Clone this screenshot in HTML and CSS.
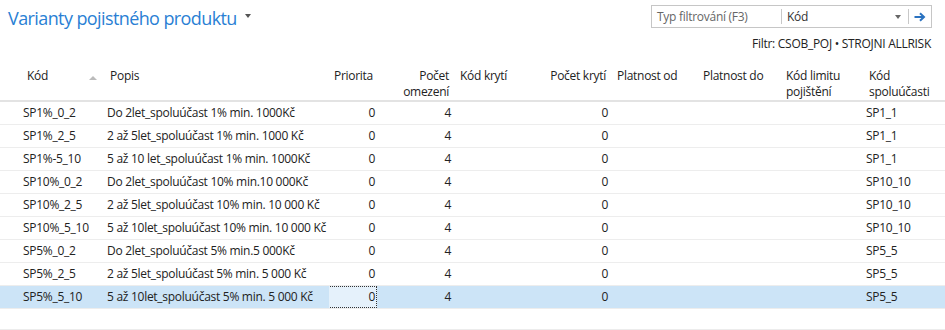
FILE: index.html
```html
<!DOCTYPE html>
<html lang="cs">
<head>
<meta charset="utf-8">
<link rel="stylesheet" href="styles.css">
</head>
<body>
<div class="page">
  <div class="topbar">
    <div class="title">Varianty pojistného produktu <span class="caret"></span></div>
    <div class="search">
      <span class="search-input">Typ filtrování (F3)</span>
      <span class="sep"></span>
      <span class="search-field">Kód</span>
      <span class="dd"></span>
      <span class="sep sep2"></span>
      <svg class="go" width="12" height="10" viewBox="0 0 12 10"><path d="M0.5 5H9.5M6 1.2L10 5L6 8.8" fill="none" stroke="#2a72c0" stroke-width="2"/></svg>
    </div>
  </div>
  <div class="filter">Filtr: CSOB_POJ • STROJNI ALLRISK</div>
  <table class="grid">
    <colgroup>
      <col class="c1"><col class="c2"><col class="c3"><col class="c4"><col class="c5"><col class="c6"><col class="c7"><col class="c8"><col class="c9"><col class="c10">
    </colgroup>
    <thead>
      <tr>
        <th class="h-kod">Kód<span class="sort"></span></th>
        <th class="h-popis">Popis</th>
        <th class="num">Priorita</th>
        <th class="num">Počet<br>omezení</th>
        <th>Kód krytí</th>
        <th class="num">Počet krytí</th>
        <th>Platnost od</th>
        <th>Platnost do</th>
        <th>Kód limitu<br>pojištění</th>
        <th class="h-last">Kód<br>spoluúčasti</th>
      </tr>
    </thead>
    <tbody>
      <tr><td>SP1%_0_2</td><td>Do 2let_spoluúčast 1% min. 1000Kč</td><td class="num">0</td><td class="num">4</td><td></td><td class="num">0</td><td></td><td></td><td></td><td class="last">SP1_1</td></tr>
      <tr><td>SP1%_2_5</td><td>2 až 5let_spoluúčast 1% min. 1000 Kč</td><td class="num">0</td><td class="num">4</td><td></td><td class="num">0</td><td></td><td></td><td></td><td class="last">SP1_1</td></tr>
      <tr><td>SP1%-5_10</td><td>5 až 10 let_spoluúčast 1% min. 1000Kč</td><td class="num">0</td><td class="num">4</td><td></td><td class="num">0</td><td></td><td></td><td></td><td class="last">SP1_1</td></tr>
      <tr><td>SP10%_0_2</td><td>Do 2let_spoluúčast 10% min.10 000Kč</td><td class="num">0</td><td class="num">4</td><td></td><td class="num">0</td><td></td><td></td><td></td><td class="last">SP10_10</td></tr>
      <tr><td>SP10%_2_5</td><td>2 až 5let_spoluúčast 10% min. 10 000 Kč</td><td class="num">0</td><td class="num">4</td><td></td><td class="num">0</td><td></td><td></td><td></td><td class="last">SP10_10</td></tr>
      <tr><td>SP10%_5_10</td><td>5 až 10let_spoluúčast 10% min. 10 000 Kč</td><td class="num">0</td><td class="num">4</td><td></td><td class="num">0</td><td></td><td></td><td></td><td class="last">SP10_10</td></tr>
      <tr><td>SP5%_0_2</td><td>Do 2let_spoluúčast 5% min.5 000Kč</td><td class="num">0</td><td class="num">4</td><td></td><td class="num">0</td><td></td><td></td><td></td><td class="last">SP5_5</td></tr>
      <tr><td>SP5%_2_5</td><td>2 až 5let_spoluúčast 5% min. 5 000 Kč</td><td class="num">0</td><td class="num">4</td><td></td><td class="num">0</td><td></td><td></td><td></td><td class="last">SP5_5</td></tr>
      <tr class="sel"><td>SP5%_5_10</td><td>5 až 10let_spoluúčast 5% min. 5 000 Kč</td><td class="num focus"><span>0</span></td><td class="num">4</td><td></td><td class="num">0</td><td></td><td></td><td></td><td class="last">SP5_5</td></tr>
    </tbody>
  </table>
  <div class="bottom"></div>
</div>
</body>
</html>
```
FILE: styles.css
```css
html, body {
  margin: 0;
  padding: 0;
  background: #fff;
}
body {
  width: 945px;
  height: 330px;
  overflow: hidden;
  font-family: "Open Sans", "Noto Sans", sans-serif;
  font-size: 12px;
  letter-spacing: -0.28px;
  color: #222;
}
.page {
  position: relative;
  width: 945px;
  height: 330px;
}
.topbar {
  display: flex;
  justify-content: space-between;
  align-items: flex-start;
  height: 34px;
}
.title {
  margin: 5px 0 0 8px;
  font-size: 18px;
  letter-spacing: -0.6px;
  color: #2a7fd4;
  line-height: 26px;
  display: flex;
  align-items: center;
}
.caret {
  display: inline-block;
  margin-left: 8px;
  width: 0;
  height: 0;
  border-left: 3.5px solid transparent;
  border-right: 3.5px solid transparent;
  border-top: 4px solid #555;
  position: relative;
  top: -2px;
}
.search {
  margin: 5px 13px 0 0;
  width: 279px;
  height: 21px;
  border: 1px solid #c6c6c6;
  display: flex;
  align-items: center;
  font-size: 12px;
}
.search-input {
  width: 124px;
  padding-left: 5px;
  color: #666;
}
.sep {
  width: 1px;
  height: 15px;
  background: #c8c8c8;
}
.search-field {
  flex: 1;
  padding-left: 5px;
  color: #333;
}
.dd {
  width: 0;
  height: 0;
  border-left: 3.5px solid transparent;
  border-right: 3.5px solid transparent;
  border-top: 4px solid #666;
  margin-right: 7px;
}
.go {
  margin: 0 5px 0 5px;
}
.filter {
  text-align: right;
  padding-right: 14px;
  font-size: 12px;
  color: #222;
  height: 20px;
  line-height: 20px;
}
.grid {
  border-collapse: collapse;
  table-layout: fixed;
  width: 945px;
  margin-top: 8px;
}
.c1 { width: 100px; }
.c2 { width: 229px; }
.c3 { width: 50px; }
.c4 { width: 76px; }
.c5 { width: 85px; }
.c6 { width: 72px; }
.c7 { width: 86px; }
.c8 { width: 83px; }
.c9 { width: 83px; }
.c10 { width: 81px; }
.grid th {
  font-weight: normal;
  text-align: left;
  vertical-align: top;
  line-height: 16px;
  height: 36px;
  padding: 6px 0 0 5px;
  box-sizing: border-box;
  border-bottom: 2px solid #e3e3e3;
  color: #222;
}
.grid th.h-kod {
  padding-left: 27px;
  position: relative;
}
.grid th.h-popis {
  padding-left: 10px;
}
.grid th.num {
  text-align: right;
  padding: 6px 6px 0 0;
}
.grid th.h-last {
  padding-left: 5px;
}
.sort {
  position: absolute;
  left: 89px;
  top: 14px;
  width: 0;
  height: 0;
  border-left: 4px solid transparent;
  border-right: 4px solid transparent;
  border-bottom: 4px solid #bbb;
}
.grid td {
  height: 22px;
  padding: 0 0 0 5px;
  border-bottom: 1px solid #ededed;
  white-space: nowrap;
  overflow: hidden;
  line-height: 22px;
}
.grid td:first-child {
  padding-left: 23px;
}
.grid td:nth-child(2) {
  padding-left: 7px;
}
.grid td.num {
  text-align: right;
  padding: 0 4px 0 0;
}
.grid td.last {
  padding-left: 2px;
}
.grid tr.sel td {
  background: #cce4f7;
}
.grid tr.sel td.focus {
  padding: 0 2px 0 0;
}
.grid tr.sel td.focus span {
  display: block;
  height: 20px;
  line-height: 20px;
  margin-left: -1px;
  padding-right: 1px;
  border: 1px dotted #333;
  background: #e5f1fb;
}
.bottom {
  position: absolute;
  left: 0;
  right: 0;
  top: 329px;
  height: 1px;
  background: #ececec;
}
```
